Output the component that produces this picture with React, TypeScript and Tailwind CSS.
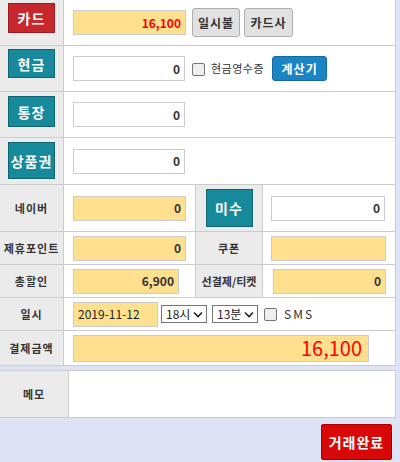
import React from "react";

const border = "border-[#cccccc]";

function LabelCell({
  children,
  width = "w-[64px]",
  top = false,
}: {
  children: React.ReactNode;
  width?: string;
  top?: boolean;
}) {
  return (
    <div
      className={`${width} shrink-0 bg-[#ebebeb] border-r ${border} flex justify-center ${
        top ? "items-start" : "items-center"
      }`}
    >
      {children}
    </div>
  );
}

function Label({ children }: { children: React.ReactNode }) {
  return (
    <span className="text-[11px] font-bold text-[#333333] tracking-[1px] leading-none whitespace-nowrap">
      {children}
    </span>
  );
}

function PayButton({
  children,
  color,
  className = "",
}: {
  children: React.ReactNode;
  color: "red" | "teal";
  className?: string;
}) {
  const palette =
    color === "red"
      ? "bg-[#c6282d] border-[#9b1c20]"
      : "bg-[#168a9b] border-[#0f6472]";
  return (
    <div
      className={`w-[47px] border ${palette} flex items-center justify-center text-white text-[14px] font-bold tracking-[1px] leading-none ${className}`}
    >
      {children}
    </div>
  );
}

function Field({
  width,
  value = "",
  yellow = false,
  red = false,
  height = "h-[25px]",
}: {
  width: string;
  value?: string;
  yellow?: boolean;
  red?: boolean;
  height?: string;
}) {
  return (
    <div
      className={`${width} ${height} shrink-0 border ${border} ${
        yellow ? "bg-[#ffe08f]" : "bg-white"
      } flex items-center justify-end pr-[4px] text-[12px] font-bold leading-none ${
        red ? "text-[#ff0000]" : "text-[#333333]"
      }`}
    >
      {value}
    </div>
  );
}

function CheckBox() {
  return (
    <span className="inline-block w-[13px] h-[13px] shrink-0 border border-[#767676] rounded-[2px] bg-[#eeeeee]" />
  );
}

function Select({ text }: { text: string }) {
  return (
    <div className="w-[46px] h-[18px] shrink-0 border border-[#767676] bg-white flex items-center justify-between pl-[4px] pr-[3px] text-[12px] text-[#222222] leading-none">
      <span>{text}</span>
      <svg width="10" height="7" viewBox="0 0 10 7">
        <path d="M1 1.5 L5 5.5 L9 1.5" fill="none" stroke="#222222" strokeWidth="1.6" />
      </svg>
    </div>
  );
}

export default function App() {
  return (
    <div className="w-[400px] h-[462px] bg-[#dee4f5] font-['Noto_Sans_CJK_KR',sans-serif] overflow-hidden">
      <div className={`w-[396px] bg-white border-r ${border}`}>
        {/* 카드 */}
        <div className={`flex h-[46px] border-b ${border}`}>
          <LabelCell top>
            <PayButton color="red" className="h-[30px] mt-[3px]">
              카드
            </PayButton>
          </LabelCell>
          <div className="flex-1 flex items-center pl-[9px]">
            <Field width="w-[113px]" value="16,100" yellow red />
            <div className="ml-[6px] w-[48px] h-[29px] border border-[#adadad] rounded-[3px] bg-[#e1e1e1] flex items-center justify-center text-[12px] font-bold text-[#333333] tracking-[1px] leading-none">
              일시불
            </div>
            <div className="ml-[4px] w-[49px] h-[29px] border border-[#adadad] rounded-[3px] bg-[#e1e1e1] flex items-center justify-center text-[12px] font-bold text-[#333333] tracking-[1px] leading-none">
              카드사
            </div>
          </div>
        </div>

        {/* 현금 */}
        <div className={`flex h-[46px] border-b ${border}`}>
          <LabelCell top>
            <PayButton color="teal" className="h-[29px] mt-[3px]">
              현금
            </PayButton>
          </LabelCell>
          <div className="flex-1 flex items-center pl-[9px]">
            <Field width="w-[112px]" value="0" />
            <div className="ml-[7px]">
              <CheckBox />
            </div>
            <span className="ml-[6px] text-[11px] text-[#333333] tracking-[0.5px] leading-none">
              현금영수증
            </span>
            <div className="ml-[8px] w-[55px] h-[25px] rounded-[3px] border border-[#156b9f] bg-[#1b84c4] flex items-center justify-center text-white text-[12px] font-bold tracking-[1px] leading-none">
              계산기
            </div>
          </div>
        </div>

        {/* 통장 */}
        <div className={`flex h-[46px] border-b ${border}`}>
          <LabelCell top>
            <PayButton color="teal" className="h-[31px] mt-[4px]">
              통장
            </PayButton>
          </LabelCell>
          <div className="flex-1 flex items-center pl-[9px]">
            <Field width="w-[112px]" value="0" />
          </div>
        </div>

        {/* 상품권 */}
        <div className={`flex h-[47px] border-b ${border}`}>
          <LabelCell top>
            <PayButton color="teal" className="h-[37px] mt-[4px] text-[13px] tracking-[0px]">
              상품권
            </PayButton>
          </LabelCell>
          <div className="flex-1 flex items-center pl-[9px]">
            <Field width="w-[112px]" value="0" />
          </div>
        </div>

        {/* 네이버 / 미수 */}
        <div className={`flex h-[47px] border-b ${border}`}>
          <LabelCell>
            <Label>네이버</Label>
          </LabelCell>
          <div className={`w-[132px] shrink-0 border-r ${border} flex items-center pl-[9px]`}>
            <Field width="w-[113px]" value="0" yellow />
          </div>
          <LabelCell width="w-[67px]" top>
            <PayButton color="teal" className="h-[38px] mt-[4px]">
              미수
            </PayButton>
          </LabelCell>
          <div className="flex-1 flex items-center pl-[8px]">
            <Field width="w-[114px]" value="0" />
          </div>
        </div>

        {/* 제휴포인트 / 쿠폰 */}
        <div className={`flex h-[33px] border-b ${border}`}>
          <LabelCell>
            <Label>제휴포인트</Label>
          </LabelCell>
          <div className={`w-[132px] shrink-0 border-r ${border} flex items-center pl-[9px]`}>
            <Field width="w-[113px]" value="0" yellow />
          </div>
          <LabelCell width="w-[67px]">
            <Label>쿠폰</Label>
          </LabelCell>
          <div className="flex-1 flex items-center pl-[8px]">
            <Field width="w-[115px]" yellow />
          </div>
        </div>

        {/* 총할인 / 선결제 */}
        <div className={`flex h-[33px] border-b ${border}`}>
          <LabelCell>
            <Label>총할인</Label>
          </LabelCell>
          <div className={`w-[132px] shrink-0 border-r ${border} flex items-center pl-[9px]`}>
            <Field width="w-[106px]" value="6,900" yellow />
          </div>
          <LabelCell width="w-[67px]">
            <span className="text-[11px] font-bold text-[#333333] tracking-[0px] leading-none whitespace-nowrap">
              선결제/티켓
            </span>
          </LabelCell>
          <div className="flex-1 flex items-center pl-[10px]">
            <Field width="w-[113px]" value="0" yellow />
          </div>
        </div>

        {/* 일시 */}
        <div className={`flex h-[33px] border-b ${border}`}>
          <LabelCell>
            <Label>일시</Label>
          </LabelCell>
          <div className="flex-1 flex items-center pl-[9px]">
            <div className={`w-[85px] h-[25px] shrink-0 border ${border} bg-[#ffe08f] flex items-center pl-[4px] text-[12px] text-[#222222] leading-none`}>
              2019-11-12
            </div>
            <div className="ml-[3px]">
              <Select text="18시" />
            </div>
            <div className="ml-[5px]">
              <Select text="13분" />
            </div>
            <div className="ml-[6px]">
              <CheckBox />
            </div>
            <span className="ml-[7px] text-[12px] text-[#333333] tracking-[2px] leading-none">
              SMS
            </span>
          </div>
        </div>

        {/* 결제금액 */}
        <div className={`flex h-[35px] border-b ${border}`}>
          <LabelCell>
            <Label>결제금액</Label>
          </LabelCell>
          <div className="flex-1 flex items-center pl-[9px]">
            <div className={`w-[296px] h-[27px] shrink-0 border ${border} bg-[#ffe08f] flex items-center justify-end pr-[6px] text-[20px] text-[#ff0000] leading-none`}>
              16,100
            </div>
          </div>
        </div>
      </div>

      {/* 메모 */}
      <div className={`mt-[4px] w-[396px] h-[48px] bg-white border-t border-b border-r ${border} flex`}>
        <LabelCell width="w-[69px]">
          <Label>메모</Label>
        </LabelCell>
        <div className="flex-1" />
      </div>

      <div className="flex justify-end pt-[6px] pr-[8px]">
        <div className="w-[71px] h-[36px] rounded-[2px] border border-[#a80000] bg-[#d80808] flex items-center justify-center text-white text-[14px] font-bold tracking-[1px] leading-none">
          거래완료
        </div>
      </div>
    </div>
  );
}
